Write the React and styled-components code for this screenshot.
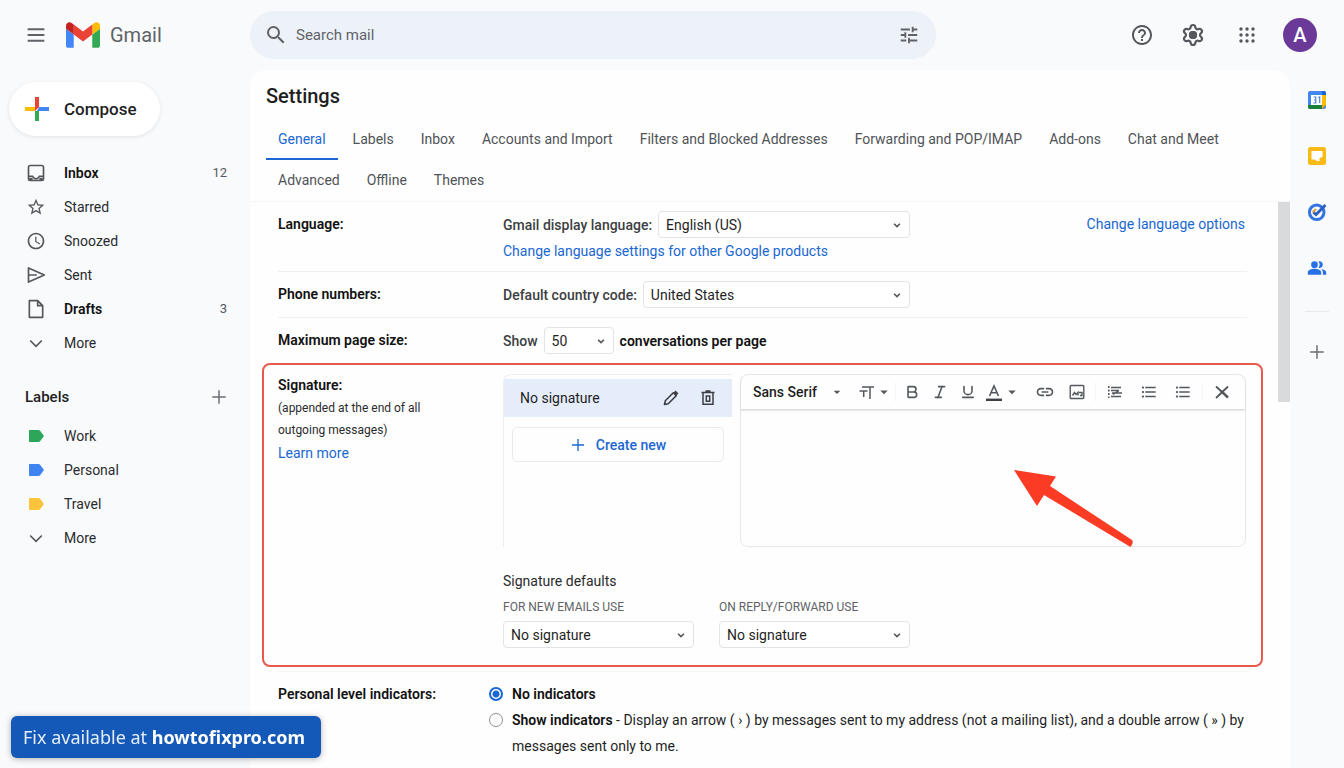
import React, { useState } from 'react'
import styled, { createGlobalStyle, css } from 'styled-components'
import { Settings, Bold, Italic, Underline } from 'lucide-react'
import {
  MdSearch,
  MdTune,
  MdHelpOutline,
  MdStarBorder,
  MdAccessTime,
  MdArrowDropDown,
  MdLink,
  MdFormatListBulleted,
  MdPeopleAlt,
} from 'react-icons/md'

const GlobalStyle = createGlobalStyle`
  * {
    box-sizing: border-box;
  }

  body {
    margin: 0;
    background: #f9fafc;
    color: #1f1f1f;
    font-family: Roboto, Inter, sans-serif;
    font-size: 14px;
    line-height: 20px;
  }

  button, input, select, textarea {
    font: inherit;
    color: inherit;
  }

  button {
    padding: 0;
    border: none;
    background: none;
    cursor: pointer;
  }

  svg {
    display: block;
    flex-shrink: 0;
  }
`

const Page = styled.div`
  display: flex;
  flex-direction: column;
  height: 100vh;
  overflow: hidden;
`

/* header */

const Header = styled.header`
  display: flex;
  align-items: center;
  flex-shrink: 0;
  height: 70px;
  padding-right: 27px;
`

const Brand = styled.div`
  display: flex;
  align-items: center;
  width: 250px;
  padding-left: 26px;
  color: #5f6368;
`

const BrandLink = styled.a`
  display: flex;
  align-items: center;
  gap: 10px;
  margin-left: 20px;
  color: #5f6368;
  font-size: 20px;
  line-height: 28px;
  text-decoration: none;
`

const SearchBar = styled.form`
  display: flex;
  align-items: center;
  flex: 1;
  max-width: 686px;
  height: 48px;
  padding: 0 16px 0 14px;
  border-radius: 24px;
  background: #edf1f8;
  color: #5f6368;
`

const SearchInput = styled.input`
  flex: 1;
  min-width: 0;
  margin-left: 6px;
  border: none;
  outline: none;
  background: none;
  font-size: 15px;

  &::placeholder {
    color: #5f6368;
    opacity: 1;
  }
`

const HeaderActions = styled.div`
  display: flex;
  align-items: center;
  gap: 27px;
  margin-left: auto;
  color: #54585d;
`

const HelpActions = styled.div`
  display: flex;
  gap: 27px;
  margin-right: 6px;
`

const IconButton = styled.button`
  display: flex;
  align-items: center;
  justify-content: center;
`

const Avatar = styled.button`
  width: 34px;
  height: 34px;
  border-radius: 50%;
  background: #6b3a99;
  color: #fff;
  font-size: 20px;
  font-weight: 500;
`

/* sidebar */

const Body = styled.div`
  display: flex;
  flex: 1;
  min-height: 0;
`

const Sidebar = styled.aside`
  flex-shrink: 0;
  width: 250px;
  padding-top: 12px;
`

const ComposeButton = styled.button`
  display: flex;
  align-items: center;
  gap: 15px;
  height: 54px;
  margin: 0 0 20px 9px;
  padding: 0 23px 0 16px;
  border-radius: 27px;
  background: #fff;
  box-shadow: 0 1px 4px rgba(60, 64, 67, 0.12);
  font-size: 17px;
  font-weight: 500;
`

const NavList = styled.ul`
  margin: 0;
  padding: 0 23px 0 26px;
  list-style: none;
`

const NavItem = styled.a`
  display: flex;
  align-items: center;
  gap: 18px;
  height: 34px;
  color: ${({ $bold }) => ($bold ? '#111' : '#2a2b2d')};
  font-weight: ${({ $bold }) => ($bold ? 600 : 400)};
  text-decoration: none;

  svg {
    color: #54585d;
  }
`

const Count = styled.span`
  margin-left: auto;
  color: #54585d;
  font-size: 13px;
  font-weight: 400;
`

const LabelsHead = styled.div`
  display: flex;
  align-items: center;
  justify-content: space-between;
  height: 34px;
  margin: 20px 0 5px;
  padding: 0 22px 0 25px;
  color: #6b6f74;
`

const LabelsTitle = styled.h2`
  margin: 0;
  color: #1f1f1f;
  font-size: 15px;
  font-weight: 500;
`

/* settings */

const Main = styled.main`
  display: flex;
  flex-direction: column;
  flex: 1;
  min-width: 0;
  border-radius: 16px 16px 0 0;
  background: #fefefe;
`

const Title = styled.h1`
  margin: 0;
  padding: 12px 16px 9px;
  font-size: 20px;
  font-weight: 500;
  line-height: 28px;
`

const Tabs = styled.nav`
  display: flex;
  flex-wrap: wrap;
  column-gap: 3px;
  padding: 0 16px;
`

const Tab = styled.button`
  height: 41px;
  padding: 0 12px;
  border-bottom: 2px solid ${({ $active }) => ($active ? '#1a67d2' : 'transparent')};
  color: ${({ $active }) => ($active ? '#1a67d2' : '#505357')};
`

const ScrollArea = styled.div`
  display: flex;
  flex: 1;
  min-height: 0;
  border-top: 1px solid #f5f6f7;
`

const Rows = styled.div`
  flex: 1;
  min-width: 0;
  padding: 0 31px 0 12px;
  overflow: hidden;
`

const ScrollThumb = styled.div`
  width: 12px;
  height: 200px;
  background: #d9dadc;
`

const Row = styled.section`
  display: grid;
  grid-template-columns: 225px 1fr;
  margin-left: 16px;
  padding: 9px 0;
  border-bottom: ${({ $last }) => ($last ? 'none' : '1px solid #eff0f2')};
`

const HighlightRow = styled(Row)`
  margin: 0 -16px 4px 0;
  padding: 9px 15px 17px 14px;
  border: 2px solid #e8594c;
  border-radius: 8px;
`

const IndicatorRow = styled(Row)`
  grid-template-columns: 211px 1fr;
  padding: 9px 0;
  border-top: 1px solid #f3f4f5;
`

const RowName = styled.div`
  padding-top: ${({ $flush }) => ($flush ? '1px' : '3px')};
  color: #111;
  font-weight: 600;
`

const Note = styled.p`
  margin: 2px 0;
  color: #2a2b2d;
  font-size: 12px;
  font-weight: 400;
  line-height: 22px;
`

const Link = styled.a`
  color: #1a67d2;
  font-weight: 400;
  text-decoration: none;
`

const Split = styled.div`
  display: flex;
  justify-content: space-between;
  gap: 16px;
  padding-right: 2px;

  > ${Link} {
    padding-top: 3px;
  }
`

const Field = styled.div`
  display: flex;
  align-items: center;
  gap: 6px;
  width: 407px;
  color: #3c3f43;
  font-weight: 500;
`

const Below = styled.div`
  margin: 3px 0 1px;
`

const Strong = styled.span`
  color: #111;
  font-weight: 600;
`

const SelectBox = styled.div`
  display: flex;
  align-items: center;
  position: relative;
  flex: ${({ $width }) => ($width ? 'none' : 1)};
  width: ${({ $width }) => $width || 'auto'};
  color: #54585d;

  svg {
    position: absolute;
    right: 8px;
    pointer-events: none;
  }
`

const Select = styled.select`
  appearance: none;
  width: 100%;
  height: 27px;
  padding: 0 24px 0 7px;
  border: 1px solid #e1e3e6;
  border-radius: 4px;
  background: #fff;
  color: #1f1f1f;
  font-weight: 400;
`

/* signature */

const SignatureGrid = styled.div`
  display: grid;
  grid-template-columns: 229px 1fr;
  gap: 8px;
  height: 173px;
`

const SignatureList = styled.div`
  border-top: 1px solid #eceef0;
  border-left: 1px solid #eceef0;
  border-radius: 8px 0 0 0;
  padding-top: 4px;
`

const SignatureItem = styled.div`
  display: flex;
  align-items: center;
  gap: 20px;
  height: 38px;
  padding: 0 16px;
  background: #e5edfb;
  color: #1f1f1f;

  span {
    flex: 1;
  }
`

const CreateButton = styled.button`
  display: flex;
  align-items: center;
  justify-content: center;
  gap: 10px;
  width: 212px;
  height: 35px;
  margin: 10px 0 0 8px;
  border: 1px solid #e8eaed;
  border-radius: 5px;
  color: #1a67d2;
  font-weight: 500;
`

const Editor = styled.div`
  display: flex;
  flex-direction: column;
  position: relative;
  border: 1px solid #e6e8ea;
  border-radius: 8px;
`

const Toolbar = styled.div`
  display: flex;
  align-items: center;
  height: 35px;
  border-bottom: 1px solid #dcdee0;
  border-radius: 8px 8px 0 0;
  box-shadow: 0 1px 2px rgba(60, 64, 67, 0.12);
  color: #54585d;
`

const FontBox = styled.div`
  display: flex;
  align-items: center;
  position: relative;
  width: 118px;

  svg {
    position: absolute;
    right: 14px;
    pointer-events: none;
  }
`

const FontSelect = styled.select`
  appearance: none;
  width: 100%;
  height: 28px;
  padding: 0 24px 0 12px;
  border: none;
  background: none;
  color: #1f1f1f;
  font-weight: 500;
`

const Tool = styled.button`
  display: flex;
  align-items: center;
  justify-content: center;
  width: ${({ $width }) => $width};
  height: 28px;
`

const Divider = styled.span`
  width: 1px;
  height: 20px;
  margin: 0 2px;
  background: ${({ $clear }) => ($clear ? 'transparent' : '#f6f7f8')};
`

const EditorInput = styled.textarea`
  flex: 1;
  width: 100%;
  padding: 10px 12px;
  border: none;
  outline: none;
  background: none;
  resize: none;
`

const Arrow = styled.svg`
  position: absolute;
  left: 272px;
  top: 94px;
  pointer-events: none;
`

const DefaultsTitle = styled.div`
  margin-top: 24px;
  color: #2a2b2d;
`

const Defaults = styled.div`
  display: flex;
  gap: 25px;
`

const DefaultField = styled.div`
  width: 191px;

  label {
    display: block;
    padding: 6px 0 4px;
    color: #5f6368;
    font-size: 12px;
  }
`

/* indicators */

const Radio = styled.input`
  appearance: none;
  flex-shrink: 0;
  width: 14px;
  height: 14px;
  margin: 6px 9px 0 0;
  border: 1px solid #8a8d91;
  border-radius: 50%;

  ${({ checked }) => checked && css`
    border: 2px solid #1a67d2;
    background: radial-gradient(circle, #1a67d2 3px, #fff 4px);
  `}
`

const RadioLine = styled.div`
  display: flex;
  align-items: flex-start;
  line-height: 26px;
`

/* side panel and banner */

const Rail = styled.aside`
  display: flex;
  flex-direction: column;
  align-items: center;
  flex-shrink: 0;
  width: 54px;
  padding-top: 2px;
  color: #6b6f74;

  ${IconButton} {
    height: 56px;
  }
`

const RailLine = styled.div`
  width: 24px;
  height: 1px;
  margin: 15px 0 12px;
  background: #e6e8ea;
`

const Banner = styled.div`
  position: fixed;
  left: 11px;
  bottom: 10px;
  padding: 9px 16px 9px 12px;
  border-radius: 6px;
  background: #1459b8;
  box-shadow: 0 1px 6px rgba(0, 0, 0, 0.3);
  color: #e6eefb;
  font-family: 'Noto Sans', 'Open Sans', sans-serif;
  font-size: 18px;
  line-height: 24px;

  strong {
    color: #fff;
    font-weight: 700;
  }
`

const Stroke = ({ size = 20, width = 2, children }) => (
  <svg width={size} height={size} viewBox="0 0 24 24" fill="none" stroke="currentColor" strokeWidth={width}>
    {children}
  </svg>
)

const MenuIcon = () => (
  <Stroke width={2.4}><path d="M2 5h20M2 12h20M2 19h20" /></Stroke>
)

const GmailLogo = () => (
  <svg width="34" height="26" viewBox="52 42 88 66">
    <path fill="#4285f4" d="M58 108h14V74L52 59v43c0 3.32 2.69 6 6 6" />
    <path fill="#34a853" d="M120 108h14c3.32 0 6-2.69 6-6V59l-20 15" />
    <path fill="#fbbc04" d="M120 48v26l20-15v-8c0-7.42-8.47-11.65-14.4-7.2" />
    <path fill="#ea4335" d="M72 74V48l24 18 24-18v26L96 92" />
    <path fill="#c5221f" d="M52 51v8l20 15V48l-5.6-4.2c-5.94-4.45-14.4-.22-14.4 7.2" />
  </svg>
)

const AppsIcon = () => (
  <svg width="18" height="18" viewBox="0 0 18 18" fill="currentColor">
    {[3, 9, 15].map((y) => [3, 9, 15].map((x) => <circle key={`${x}-${y}`} cx={x} cy={y} r="1.7" />))}
  </svg>
)

const ComposeIcon = () => (
  <svg width="24" height="24" viewBox="0 0 24 24">
    <path fill="#ea4335" d="M10 0h4v10l-4 4z" />
    <path fill="#4285f4" d="M14 10h10v4H12z" />
    <path fill="#34a853" d="M10 14h4v10h-4z" />
    <path fill="#fbbc04" d="M0 10h10v4H0z" />
  </svg>
)

const InboxIcon = () => (
  <Stroke>
    <rect x="3" y="3" width="18" height="18" rx="2" />
    <path d="M3 16h5c1 2 2 3 4 3s3-1 4-3h5" />
    <path d="M4 18h4v3H4zM16 18h4v3h-4z" fill="currentColor" stroke="none" />
  </Stroke>
)

const SendIcon = () => (
  <Stroke><path d="M3 3.500 22 12 3 20.500zM3 12h10" strokeLinejoin="round" /></Stroke>
)

const FileIcon = () => (
  <Stroke><path d="M6 2h8l6 6v14H4V2zM14 2v6h6" strokeLinejoin="round" /></Stroke>
)

const ChevronIcon = ({ size = 20, width = 2 }) => (
  <Stroke size={size} width={width}><path d="m5 9 7 7 7-7" /></Stroke>
)

const PlusIcon = ({ size = 18 }) => (
  <Stroke size={size}><path d="M12 3v18M3 12h18" /></Stroke>
)

const TagIcon = ({ color }) => (
  <svg width="20" height="20" viewBox="0 0 20 20">
    <path fill={color} d="M4 4h8.500c.7 0 1.200.3 1.600.8L18 10l-3.900 5.200c-.4.500-.9.800-1.600.8H4c-.6 0-1-.4-1-1V5c0-.6.400-1 1-1z" />
  </svg>
)

const PencilIcon = () => (
  <svg width="18" height="18" viewBox="0 0 18 18" fill="none" stroke="#3c3f43">
    <path d="M2.500 15.500l.8-3.700 8-8 2.900 2.900-8 8z" strokeWidth="1.600" strokeLinejoin="round" />
    <path d="M12.500 2.600l2.900 2.900" strokeWidth="3" />
  </svg>
)

const TrashIcon = () => (
  <svg width="16" height="18" viewBox="0 0 16 18" fill="none" stroke="#3c3f43" strokeWidth="1.500">
    <path d="M3 4v11.200h10V4M1.500 3.500h13M5.500 2h5M6.300 7v5.200h3.400V7z" />
  </svg>
)

const SizeIcon = () => (
  <svg width="16" height="16" viewBox="0 0 16 16" fill="none" stroke="currentColor" strokeWidth="1.500">
    <path d="M3 3h12M11 3v12M0.500 7h8M4.700 7v6" />
  </svg>
)

const ColorIcon = () => (
  <svg width="18" height="20" viewBox="0 0 18 20" fill="none" stroke="currentColor" strokeWidth="1.600">
    <path d="M4.500 14 9 4 13.500 14M6 10.800h6" />
    <path d="M1 17.800h16" strokeWidth="2.400" stroke="#3c3f43" />
  </svg>
)

const ImageIcon = () => (
  <svg width="16" height="16" viewBox="0 0 16 16" fill="none" stroke="currentColor" strokeWidth="1.400">
    <rect x="1.200" y="1.500" width="13.600" height="13" rx="1" />
    <path d="M3.500 11.500 5.500 8.500 7 10.500 9 8.500v3M10 8.500h3v3h-2" />
  </svg>
)

const AlignIcon = () => (
  <svg width="16" height="16" viewBox="0 0 16 16" fill="none" stroke="currentColor" strokeWidth="1.500">
    <path d="M1.800 2v12" strokeDasharray="2 1.500" />
    <path d="M4 3.500h10M4 6.500h8M5 9h10M4 12.500h10M6 10.500l6-4" />
  </svg>
)

const ClearIcon = () => (
  <svg width="16" height="16" viewBox="0 0 16 16" fill="none" stroke="currentColor">
    <path d="M2 2.500 8 8M2 14 14 2.500" strokeWidth="1.800" />
    <path d="m7 7 7 6.500" strokeWidth="2.400" />
  </svg>
)

const CalendarIcon = () => (
  <svg width="20" height="20" viewBox="0 0 20 20">
    <rect x="1" y="1" width="18" height="18" rx="2" fill="#4285f4" />
    <path fill="#fbbc04" d="M15 5h4v10h-4z" />
    <path fill="#188038" d="M1 15h14v4H3c-1.100 0-2-.9-2-2z" />
    <path fill="#f6a609" d="M15 15h4l-4 4z" />
    <path fill="#1967d2" d="M15 1h2c1.100 0 2 .9 2 2v2h-4z" />
    <path fill="#fff" d="M4 5h11v10H4z" />
    <path fill="none" stroke="#4c86dd" strokeWidth="1.200" d="M6.500 7h2.300v2.800H7.200M8.800 9.800V13H6.400M11.300 7.600l1.400-.6v6" />
  </svg>
)

const KeepIcon = () => (
  <svg width="20" height="20" viewBox="0 0 20 20">
    <rect x="1" y="1" width="18" height="18" rx="2.500" fill="#f9b916" />
    <path fill="#fff" d="M5 5h10c.3 0 .5.200.5.500V11l-3 1v3H10l-2.500-1.500H5c-.3 0-.5-.2-.5-.5V5.500c0-.3.200-.5.500-.5z" />
  </svg>
)

const TasksIcon = () => (
  <svg width="20" height="20" viewBox="0 0 20 20" fill="none">
    <circle cx="9.700" cy="10.300" r="7.300" stroke="#3575e0" strokeWidth="3" />
    <path d="M5.500 10.500 9 7" stroke="#e0a34c" strokeWidth="2.400" />
    <path d="M6.500 10.500 9 12.500 18.500 3" stroke="#2a5fc0" strokeWidth="2.800" />
  </svg>
)

const NAV = [
  { text: 'Inbox', icon: <InboxIcon />, count: 12, bold: true },
  { text: 'Starred', icon: <MdStarBorder size={20} /> },
  { text: 'Snoozed', icon: <MdAccessTime size={20} /> },
  { text: 'Sent', icon: <SendIcon /> },
  { text: 'Drafts', icon: <FileIcon />, count: 3, bold: true },
  { text: 'More', icon: <ChevronIcon /> },
]

const LABELS = [
  { text: 'Work', icon: <TagIcon color="#2da65a" /> },
  { text: 'Personal', icon: <TagIcon color="#3f82f2" /> },
  { text: 'Travel', icon: <TagIcon color="#fcc43c" /> },
  { text: 'More', icon: <ChevronIcon /> },
]

const TABS = [
  'General',
  'Labels',
  'Inbox',
  'Accounts and Import',
  'Filters and Blocked Addresses',
  'Forwarding and POP/IMAP',
  'Add-ons',
  'Chat and Meet',
  'Advanced',
  'Offline',
  'Themes',
]

const Nav = ({ items }) => (
  <NavList>
    {items.map((item) => (
      <li key={item.text}>
        <NavItem href="#" $bold={item.bold}>
          {item.icon}
          {item.text}
          {item.count && <Count>{item.count}</Count>}
        </NavItem>
      </li>
    ))}
  </NavList>
)

const Dropdown = ({ id, value, width, label }) => (
  <SelectBox $width={width}>
    <Select id={id} aria-label={label} defaultValue={value}>
      <option>{value}</option>
    </Select>
    <ChevronIcon size={10} width={4} />
  </SelectBox>
)

const App = () => {
  const [tab, setTab] = useState('General')
  const [indicators, setIndicators] = useState('none')

  return (
    <Page>
      <GlobalStyle />
      <Header>
        <Brand>
          <IconButton aria-label="Main menu"><MenuIcon /></IconButton>
          <BrandLink href="#"><GmailLogo />Gmail</BrandLink>
        </Brand>
        <SearchBar onSubmit={(e) => e.preventDefault()}>
          <MdSearch size={24} />
          <SearchInput type="text" placeholder="Search mail" aria-label="Search mail" />
          <IconButton type="button" aria-label="Search options"><MdTune size={22} /></IconButton>
        </SearchBar>
        <HeaderActions>
          <HelpActions>
            <IconButton aria-label="Support"><MdHelpOutline size={24} /></IconButton>
            <IconButton aria-label="Settings">
              <Settings size={24} strokeWidth={2.2}>
                <circle cx="12" cy="12" r="3" fill="currentColor" />
              </Settings>
            </IconButton>
          </HelpActions>
          <IconButton aria-label="Apps"><AppsIcon /></IconButton>
          <Avatar>A</Avatar>
        </HeaderActions>
      </Header>

      <Body>
        <Sidebar>
          <ComposeButton><ComposeIcon />Compose</ComposeButton>
          <Nav items={NAV} />
          <LabelsHead>
            <LabelsTitle>Labels</LabelsTitle>
            <IconButton aria-label="Create label"><PlusIcon /></IconButton>
          </LabelsHead>
          <Nav items={LABELS} />
        </Sidebar>

        <Main>
          <Title>Settings</Title>
          <Tabs>
            {TABS.map((name) => (
              <Tab key={name} $active={tab === name} onClick={() => setTab(name)}>{name}</Tab>
            ))}
          </Tabs>
          <ScrollArea>
            <Rows>
              <Row>
                <RowName>Language:</RowName>
                <Split>
                  <div>
                    <Field>
                      <label htmlFor="language">Gmail display language:</label>
                      <Dropdown id="language" value="English (US)" />
                    </Field>
                    <Below>
                      <Link href="#">Change language settings for other Google products</Link>
                    </Below>
                  </div>
                  <Link href="#">Change language options</Link>
                </Split>
              </Row>
              <Row>
                <RowName>Phone numbers:</RowName>
                <Field>
                  <label htmlFor="country">Default country code:</label>
                  <Dropdown id="country" value="United States" />
                </Field>
              </Row>
              <Row $last>
                <RowName>Maximum page size:</RowName>
                <Field>
                  <label htmlFor="page-size">Show</label>
                  <Dropdown id="page-size" value="50" width="70px" />
                  <Strong>conversations per page</Strong>
                </Field>
              </Row>
              <HighlightRow>
                <RowName $flush>
                  Signature:
                  <Note>(appended at the end of all<br />outgoing messages)</Note>
                  <Link href="#">Learn more</Link>
                </RowName>
                <div>
                  <SignatureGrid>
                    <SignatureList>
                      <SignatureItem>
                        <span>No signature</span>
                        <IconButton aria-label="Edit signature"><PencilIcon /></IconButton>
                        <IconButton aria-label="Delete signature"><TrashIcon /></IconButton>
                      </SignatureItem>
                      <CreateButton><PlusIcon size={16} />Create new</CreateButton>
                    </SignatureList>
                    <Editor>
                      <Toolbar>
                        <FontBox>
                          <FontSelect aria-label="Font" defaultValue="Sans Serif">
                            <option>Sans Serif</option>
                          </FontSelect>
                          <MdArrowDropDown size={16} />
                        </FontBox>
                        <Tool $width="34px" aria-label="Size"><SizeIcon /><MdArrowDropDown size={18} /></Tool>
                        <Divider />
                        <Tool $width="28px" aria-label="Bold"><Bold size={16} strokeWidth={2.4} /></Tool>
                        <Tool $width="28px" aria-label="Italic"><Italic size={16} strokeWidth={2.4} /></Tool>
                        <Tool $width="28px" aria-label="Underline"><Underline size={16} strokeWidth={2.4} /></Tool>
                        <Tool $width="42px" aria-label="Text color"><ColorIcon /><MdArrowDropDown size={18} /></Tool>
                        <Divider $clear />
                        <Tool $width="32px" aria-label="Link"><MdLink size={20} /></Tool>
                        <Tool $width="32px" aria-label="Insert image"><ImageIcon /></Tool>
                        <Divider />
                        <Tool $width="34px" aria-label="Align"><AlignIcon /></Tool>
                        <Tool $width="34px" aria-label="Numbered list"><MdFormatListBulleted size={18} /></Tool>
                        <Tool $width="34px" aria-label="Bulleted list"><MdFormatListBulleted size={18} /></Tool>
                        <Divider />
                        <Tool $width="34px" aria-label="Remove formatting"><ClearIcon /></Tool>
                      </Toolbar>
                      <EditorInput aria-label="Signature text" />
                      <Arrow width="124" height="84" viewBox="0 0 124 84">
                        <path fill="#fb3b24" d="M1 1 43 7.500 37 17 119 71Q121 74 117.500 78L31 26 24 37Z" />
                      </Arrow>
                    </Editor>
                  </SignatureGrid>
                  <DefaultsTitle>Signature defaults</DefaultsTitle>
                  <Defaults>
                    <DefaultField>
                      <label htmlFor="new-emails">FOR NEW EMAILS USE</label>
                      <Dropdown id="new-emails" value="No signature" />
                    </DefaultField>
                    <DefaultField>
                      <label htmlFor="reply">ON REPLY/FORWARD USE</label>
                      <Dropdown id="reply" value="No signature" />
                    </DefaultField>
                  </Defaults>
                </div>
              </HighlightRow>
              <IndicatorRow $last>
                <RowName>Personal level indicators:</RowName>
                <div>
                  <RadioLine>
                    <Radio
                      type="radio"
                      id="ind-none"
                      name="indicators"
                      checked={indicators === 'none'}
                      onChange={() => setIndicators('none')}
                    />
                    <label htmlFor="ind-none"><Strong>No indicators</Strong></label>
                  </RadioLine>
                  <RadioLine>
                    <Radio
                      type="radio"
                      id="ind-show"
                      name="indicators"
                      checked={indicators === 'show'}
                      onChange={() => setIndicators('show')}
                    />
                    <label htmlFor="ind-show">
                      <Strong>Show indicators</Strong> - Display an arrow ( › ) by messages sent to my address (not a mailing list), and a double arrow ( » ) by messages sent only to me.
                    </label>
                  </RadioLine>
                </div>
              </IndicatorRow>
            </Rows>
            <ScrollThumb />
          </ScrollArea>
        </Main>

        <Rail>
          <IconButton aria-label="Calendar"><CalendarIcon /></IconButton>
          <IconButton aria-label="Keep"><KeepIcon /></IconButton>
          <IconButton aria-label="Tasks"><TasksIcon /></IconButton>
          <IconButton aria-label="Contacts"><MdPeopleAlt size={20} color="#2671e5" /></IconButton>
          <RailLine />
          <IconButton aria-label="Get add-ons"><PlusIcon /></IconButton>
        </Rail>
      </Body>

      <Banner>Fix available at <strong>howtofixpro.com</strong></Banner>
    </Page>
  )
}

export default App
